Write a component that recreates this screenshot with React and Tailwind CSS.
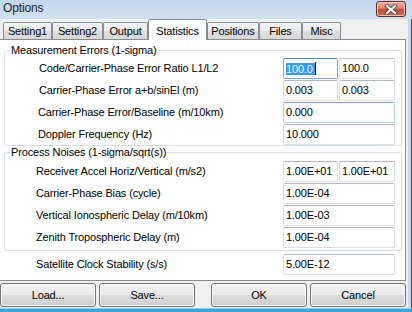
import React from "react";

function Box({ value, variant = "normal", className = "" }) {
  let border = "border-[#dde1e6] border-t-[#b4b7bd]";
  if (variant === "focus") border = "border-[#7ea7d3] border-t-[#4f86be]";
  if (variant === "hover") border = "border-[#b6d2ea] border-t-[#76a7d4]";
  return (
    <div
      className={
        "h-[21px] bg-white border rounded-[2px] flex items-center pl-[2px] overflow-hidden " +
        border +
        " " +
        className
      }
    >
      {variant === "focus" ? (
        <span className="flex items-center">
          <span className="bg-[#3399ff] text-white leading-[12px] pr-[2px]">{value}</span>
          <span className="w-px h-[13px] bg-black"></span>
        </span>
      ) : (
        <span>{value}</span>
      )}
    </div>
  );
}

function Row({ label, labelPad, pr, values, variants = [], wide = false }) {
  return (
    <div className={"flex items-center h-[21px] " + pr}>
      <div className={"flex-1 whitespace-nowrap " + labelPad}>{label}</div>
      {wide ? (
        <Box value={values[0]} variant={variants[0]} className="w-[112px]" />
      ) : (
        <div className="flex gap-[1px] w-[112px]">
          <Box value={values[0]} variant={variants[0]} className="w-[55px]" />
          <Box value={values[1]} variant={variants[1]} className="w-[56px]" />
        </div>
      )}
    </div>
  );
}

function Tab({ label, width, selected }) {
  if (selected) {
    return (
      <div
        className={
          "h-[21px] -mb-px relative z-10 bg-white border border-b-0 border-[#898c95] rounded-t-[2px] flex justify-center pt-[3px] " +
          width
        }
      >
        {label}
      </div>
    );
  }
  return (
    <div
      className={
        "h-[17px] border border-b-0 border-[#898c95] rounded-t-[2px] bg-[linear-gradient(#f3f3f3,#ebebeb_50%,#dddddd_50%,#d8d8d8)] flex justify-center items-center pt-[1px] " +
        width
      }
    >
      {label}
    </div>
  );
}

function Button({ label }) {
  return (
    <div className="w-[96px] h-[24px] rounded-[3px] border border-[#707070] bg-[linear-gradient(#f2f2f2,#ebebeb_50%,#dddddd_50%,#cfcfcf)] shadow-[inset_0_0_0_1px_#fbfbfb] flex items-center justify-center">
      {label}
    </div>
  );
}

export default function App() {
  return (
    <div className="w-[412px] h-[312px] overflow-hidden flex flex-col bg-[#c7daef] text-black text-[11px] tracking-[-0.15px] font-['Liberation_Sans',Arial,sans-serif]">
      {/* Title bar */}
      <div className="h-[19px] flex justify-between bg-[linear-gradient(#c2d6ed,#cfe0f2)]">
        <div className="pl-[3px] pt-[1px] text-[12px] leading-[15px] text-[#1e1e1e]">Options</div>
        <div className="mr-[6px] mt-[1px] w-[30px] h-[16px] rounded-[3px] border border-[#6b2a22] bg-[linear-gradient(#e8b0a3,#d98a78_45%,#c4493a_50%,#cf6e5a)] flex items-center justify-center shadow-[inset_0_0_0_1px_#f1c4b8]">
          <svg width="14" height="11" viewBox="0 0 14 11">
            <path d="M3 2 L11 9 M11 2 L3 9" stroke="#5a4b48" strokeWidth="4" strokeLinecap="square" />
            <path d="M3 2 L11 9 M11 2 L3 9" stroke="#ffffff" strokeWidth="2.2" strokeLinecap="square" />
          </svg>
        </div>
      </div>

      <div className="flex flex-1">
        {/* Client area */}
        <div className="w-[408px] bg-[#f0f0f0] flex flex-col">
          {/* Tabs */}
          <div className="h-[20px] flex items-end pl-[3px]">
            <Tab label="Setting1" width="w-[49px]" />
            <Tab label="Setting2" width="w-[51px]" />
            <Tab label="Output" width="w-[45px]" />
            <Tab label="Statistics" width="w-[59px]" selected />
            <Tab label="Positions" width="w-[52px]" />
            <Tab label="Files" width="w-[43px]" />
            <Tab label="Misc" width="w-[39px]" />
          </div>

          {/* Panel */}
          <div className="w-[406px] h-[242px] bg-white border-t border-r border-b border-[#898c95] pl-[4px] pr-[3px] pt-[4px] flex flex-col">
            <fieldset className="border border-[#d5dfe5] rounded-[3px] pb-0">
              <legend className="ml-[5px] px-[1px] leading-[13px]">Measurement Errors (1-sigma)</legend>
              <div className="flex flex-col gap-[1px] mt-[1px]">
                <Row label="Code/Carrier-Phase Error Ratio L1/L2" labelPad="pl-[34px]" pr="pr-[6px]" values={["100.0", "100.0"]} variants={["focus", "normal"]} />
                <Row label="Carrier-Phase Error a+b/sinEl (m)" labelPad="pl-[34px]" pr="pr-[6px]" values={["0.003", "0.003"]} />
                <Row label="Carrier-Phase Error/Baseline (m/10km)" labelPad="pl-[33px]" pr="pr-[6px]" values={["0.000"]} variants={["hover"]} wide />
                <Row label="Doppler Frequency (Hz)" labelPad="pl-[33px]" pr="pr-[6px]" values={["10.000"]} wide />
              </div>
            </fieldset>

            <fieldset className="border border-[#d5dfe5] rounded-[3px] pb-[2px]">
              <legend className="ml-[5px] px-[1px] leading-[13px]">Process Noises (1-sigma/sqrt(s))</legend>
              <div className="flex flex-col gap-[1px] mt-[2px]">
                <Row label="Receiver Accel Horiz/Vertical (m/s2)" labelPad="pl-[31px]" pr="pr-[6px]" values={["1.00E+01", "1.00E+01"]} />
                <Row label="Carrier-Phase Bias (cycle)" labelPad="pl-[31px]" pr="pr-[6px]" values={["1.00E-04"]} wide />
                <Row label="Vertical Ionospheric Delay (m/10km)" labelPad="pl-[31px]" pr="pr-[6px]" values={["1.00E-03"]} wide />
                <Row label="Zenith Tropospheric Delay (m)" labelPad="pl-[31px]" pr="pr-[6px]" values={["1.00E-04"]} wide />
              </div>
            </fieldset>

            <div className="mt-[3px]">
              <Row label="Satellite Clock Stability (s/s)" labelPad="pl-[32px]" pr="pr-[7px]" values={["5.00E-12"]} wide />
            </div>
          </div>

          {/* Buttons */}
          <div className="flex pt-[2px]">
            <Button label="Load..." />
            <div className="w-[3px]" />
            <Button label="Save..." />
            <div className="w-[16px]" />
            <Button label="OK" />
            <div className="w-[3px]" />
            <Button label="Cancel" />
          </div>
        </div>
        {/* Right frame */}
        <div className="flex-1 bg-[#c7daef] border-r border-[#3c4d60]" />
      </div>
      {/* Bottom frame */}
      <div className="h-[4px] bg-[#3fa3d9] border-t border-[#8fcbec]" />
    </div>
  );
}
